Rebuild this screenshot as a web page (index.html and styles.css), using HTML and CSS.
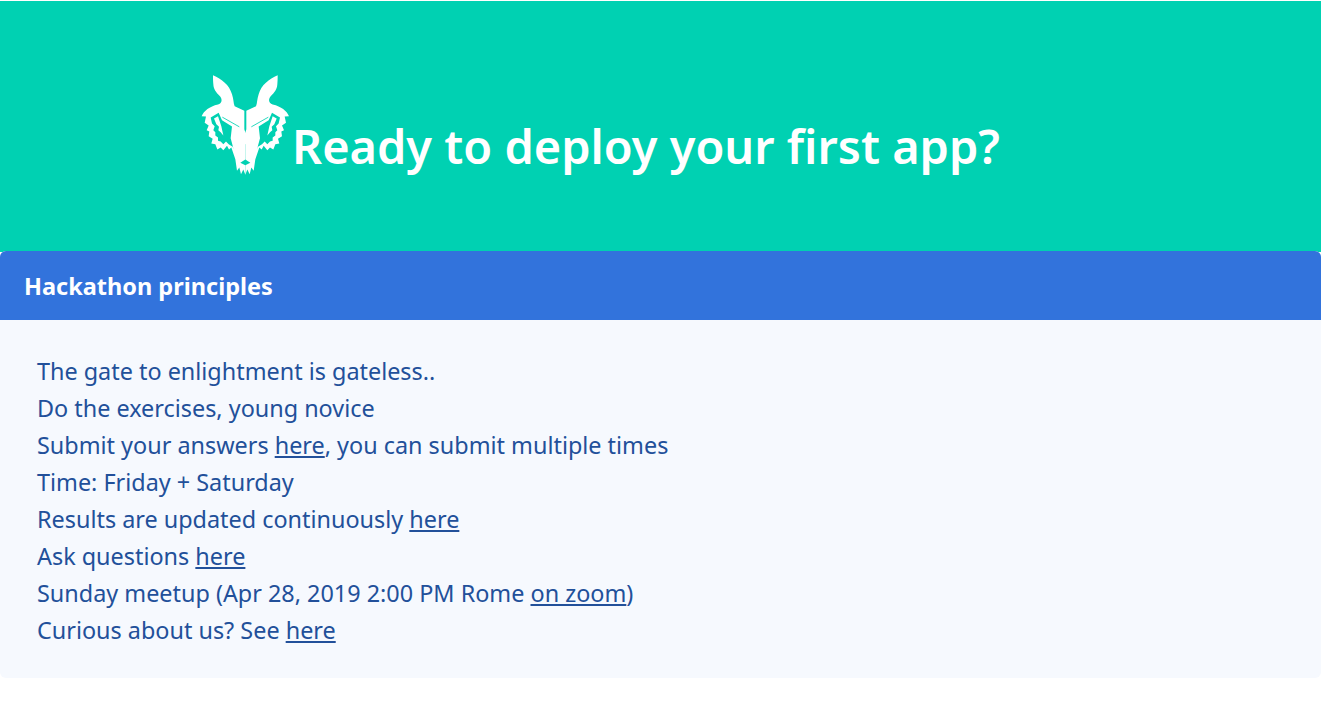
FILE: index.html
```html
<!DOCTYPE html>
<html lang="en">
<head>
<meta charset="utf-8">
<title>Hackathon</title>
<link rel="stylesheet" href="styles.css">
</head>
<body>
<section class="hero">
  <div class="hero-body">
    <h1 class="title">
      <svg class="logo" viewBox="30 30 270 305" aria-hidden="true">
        <g id="half">
          <path class="w" d="M69 33C95 44 118 62 126 90C131 104 130 116 134 126L163 140V195L166 205V332L160 316L153 330L148 310L141 320L136 285L124 250L117 256L111 245L100 258L92 250L82 256L76 240L64 238L68 224L56 216L58 202L50 198L56 184L44 176L48 157L35 156C42 140 58 127 84 121C96 117 98 106 90 96C78 84 71 76 70 60C69 50 69 42 69 33Z"/>
          <path class="g" d="M62 160L86 146L96 168L126 187L122 222L131 256L128 248L116 240L108 232L100 240L92 232L84 230L84 220L76 214L76 204L70 198L74 186L66 178Z"/>
          <path class="w" d="M72 163L84 156L94 186L100 214L92 204L85 198L87 188L79 180Z"/>
          <path class="c" d="M97 159L148 188"/>
        </g>
        <use href="#half" transform="translate(332 0) scale(-1 1)"/>
        <path class="w" d="M160 206H172V240H160Z"/>
        <path class="g" d="M151 296L166 286L181 296L166 303Z"/>
      </svg><span class="title-text">Ready to deploy your first app?</span>
    </h1>
  </div>
</section>
<article class="message">
  <div class="message-header">Hackathon principles</div>
  <div class="message-body">
    <p>The gate to enlightment is gateless..</p>
    <p>Do the exercises, young novice</p>
    <p>Submit your answers <a href="#">here</a>, you can submit multiple times</p>
    <p>Time: Friday + Saturday</p>
    <p>Results are updated continuously <a href="#">here</a></p>
    <p>Ask questions <a href="#">here</a></p>
    <p>Sunday meetup (Apr 28, 2019 2:00 PM Rome <a href="#">on zoom</a>)</p>
    <p>Curious about us? See <a href="#">here</a></p>
  </div>
</article>
</body>
</html>
```
FILE: styles.css
```css
* { box-sizing: border-box; }
html, body { margin: 0; padding: 0; background: #fff; }
body { font-family: "Noto Sans", "Open Sans", sans-serif; font-size: 16px; }
.hero { background: #00d1b2; height: 251px; margin-top: 1px; margin-bottom: -1px; }
.hero-body { padding: 73px 0 0 200px; }
.title { margin: 0; font-size: 46.9px; font-weight: 600; line-height: 58px; color: #fff; white-space: nowrap; }
.logo { display: inline-block; width: 90px; height: 102px; vertical-align: -12px; margin-right: 2px; }
.w { fill: #fff; }
.g { fill: #00d1b2; }
.c { fill: none; stroke: #00d1b2; stroke-width: 2.5; }
.message { background: #f6f9fe; border-radius: 6px; height: 427px; overflow: hidden; }
.message-header { background: #3273dc; color: #fff; height: 69px; padding: 0 24px; display: flex; align-items: center; font-weight: 700; font-size: 23.5px; }
.message-body { padding: 33px 37px; font-size: 23.4px; line-height: 37px; color: #22509a; }
.message-body p { margin: 0; }
.message-body a { color: inherit; text-decoration: underline; }
```
